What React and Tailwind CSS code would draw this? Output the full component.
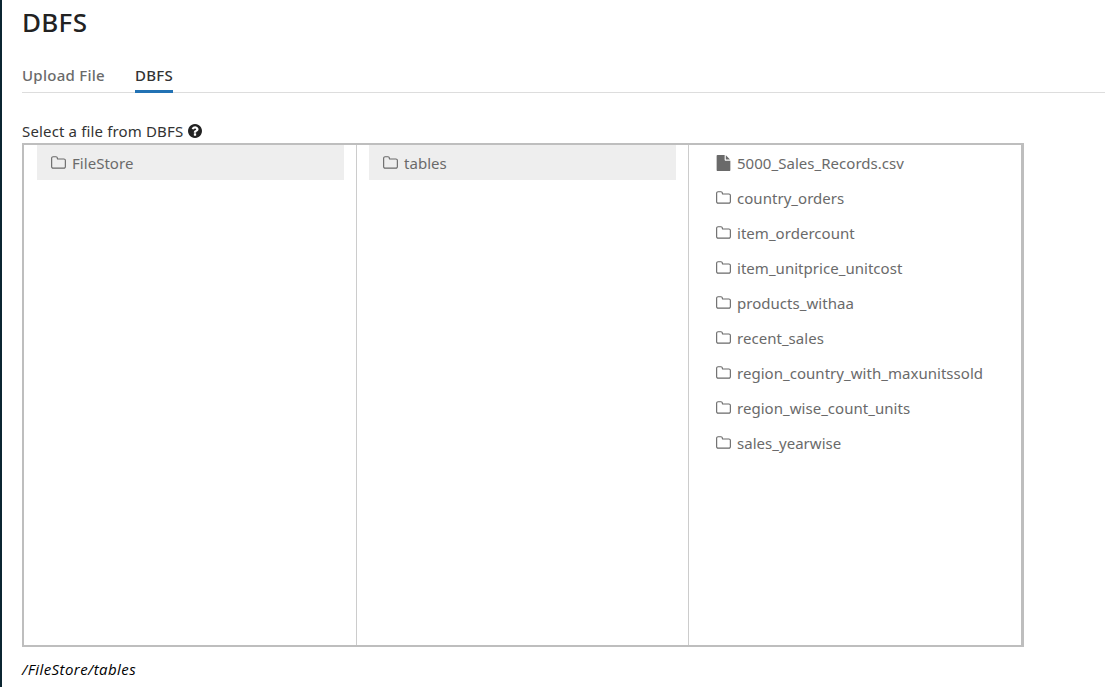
import React from "react";

const FOLDER =
  "M1600 1312v-704q0-40-28-68t-68-28h-704q-40 0-68-28t-28-68v-64q0-40-28-68t-68-28h-320q-40 0-68 28t-28 68v960q0 40 28 68t68 28h1216q40 0 68-28t28-68zm128-704v704q0 92-66 158t-158 66h-1216q-92 0-158-66t-66-158v-960q0-92 66-158t158-66h320q92 0 158 66t66 158v32h672q92 0 158 66t66 158z";
const FILE =
  "M1152 512v-472q22 14 36 28l408 408q14 14 28 36h-472zm-128 32q0 40 28 68t68 28h544v1056q0 40-28 68t-68 28h-1344q-40 0-68-28t-28-68v-1600q0-40 28-68t68-28h800v544z";
const QUESTION =
  "M1024 1376v-192q0-14-9-23t-23-9h-192q-14 0-23 9t-9 23v192q0 14 9 23t23 9h192q14 0 23-9t9-23zm256-672q0-88-55.5-163t-138.5-116-170-41q-243 0-371 213-15 24 8 42l132 100q7 6 19 6 16 0 25-12 53-68 86-92 34-24 86-24 48 0 85.5 26t37.5 59q0 38-20 61t-68 45q-63 28-115.5 86.5t-52.5 125.5v36q0 14 9 23t23 9h192q14 0 23-9t9-23q0-19 21.5-49.5t54.5-49.5q32-18 49-28.5t46-35 44.5-48 28-60.5 12.5-81zm384 192q0 209-103 385.5t-279.5 279.5-385.5 103-385.5-103-279.5-279.5-103-385.5 103-385.5 279.5-279.5 385.5-103 385.5 103 279.5 279.5 103 385.5z";

function Icon({ d, viewBox = "0 0 1792 1792", className }) {
  return (
    <svg viewBox={viewBox} className={className} fill="currentColor" aria-hidden="true">
      <path d={d} />
    </svg>
  );
}

function Entry({ name, file, selected }) {
  return (
    <div className={`flex h-[35px] items-center pl-[14px] ${selected ? "bg-[#eeeeee]" : ""}`}>
      {file ? (
        <Icon d={FILE} viewBox="128 0 1536 1792" className="mr-[6px] h-4 w-[15px] shrink-0" />
      ) : (
        <Icon d={FOLDER} viewBox="64 0 1664 1792" className="mr-[6px] h-4 w-[15px] shrink-0" />
      )}
      <span className="whitespace-nowrap leading-5 tracking-[0.035px]">{name}</span>
    </div>
  );
}

const entries = [
  { name: "5000_Sales_Records.csv", file: true },
  { name: "country_orders" },
  { name: "item_ordercount" },
  { name: "item_unitprice_unitcost" },
  { name: "products_withaa" },
  { name: "recent_sales" },
  { name: "region_country_with_maxunitssold" },
  { name: "region_wise_count_units" },
  { name: "sales_yearwise" },
];

export default function App() {
  return (
    <div className="flex h-[687px] w-[1105px] flex-col overflow-hidden border-l-2 border-[#0b2531] bg-white pl-5 font-['Noto_Sans',sans-serif] text-[15px] text-[#6a6a6a]">
      <h1 className="mt-[6px] h-8 text-[26px] font-medium leading-8 tracking-[0.3px] text-[#222222]">DBFS</h1>
      <nav className="mt-[26px] flex h-[29px] shrink-0 gap-[30px] border-b border-[#dddddd] font-medium leading-[22px]">
        <span className="h-[29px] w-[83px] whitespace-nowrap tracking-[0.27px]">Upload File</span>
        <span className="h-[29px] w-[38px] whitespace-nowrap border-b-[3px] border-[#2272b4] tracking-[0.25px] text-[#333333]">DBFS</span>
      </nav>
      <div className="mt-[27px] mb-px flex h-[22px] shrink-0 items-center text-[#333333]">
        <span className="tracking-[0.15px]">Select a file from DBFS</span>
        <Icon d={QUESTION} viewBox="128 128 1536 1536" className="ml-[5px] h-[14px] w-[14px] text-[#222222]" />
      </div>
      <div className="flex h-[504px] w-[1002px] shrink-0 border-2 border-r-[3px] border-[#bebebe]">
        <div className="w-[333px] border-r border-[#cccccc] pl-[13px] pr-3">
          <Entry name="FileStore" selected />
        </div>
        <div className="w-[332px] border-r border-[#cccccc] px-3">
          <Entry name="tables" selected />
        </div>
        <div className="w-[332px] pl-[13px]">
          {entries.map((e) => (
            <Entry key={e.name} {...e} />
          ))}
        </div>
      </div>
      <div className="mt-[11px] h-[22px] font-['Open_Sans','Noto_Sans',sans-serif] italic leading-[22px] tracking-[0.42px] text-black">/FileStore/tables</div>
    </div>
  );
}
